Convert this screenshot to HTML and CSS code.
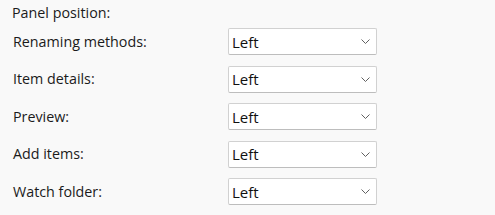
FILE: index.html
```html
<!DOCTYPE html>
<html lang="en">
<head>
    <meta charset="UTF-8">
    <title>Panel position</title>
    <link rel="stylesheet" href="styles.css">
</head>
<body>
    <div class="panel">
        <div class="section-title">Panel position:</div>
        <div class="rows">
            <div class="label">Renaming methods:</div>
            <div class="select"><span>Left</span><svg class="chevron" width="9" height="5" viewBox="0 0 9 5"><path d="M0.5 0.5 L4.5 4.5 L8.5 0.5" fill="none" stroke="#606060" stroke-width="1"/></svg></div>

            <div class="label">Item details:</div>
            <div class="select"><span>Left</span><svg class="chevron" width="9" height="5" viewBox="0 0 9 5"><path d="M0.5 0.5 L4.5 4.5 L8.5 0.5" fill="none" stroke="#606060" stroke-width="1"/></svg></div>

            <div class="label">Preview:</div>
            <div class="select"><span>Left</span><svg class="chevron" width="9" height="5" viewBox="0 0 9 5"><path d="M0.5 0.5 L4.5 4.5 L8.5 0.5" fill="none" stroke="#606060" stroke-width="1"/></svg></div>

            <div class="label">Add items:</div>
            <div class="select"><span>Left</span><svg class="chevron" width="9" height="5" viewBox="0 0 9 5"><path d="M0.5 0.5 L4.5 4.5 L8.5 0.5" fill="none" stroke="#606060" stroke-width="1"/></svg></div>

            <div class="label">Watch folder:</div>
            <div class="select"><span>Left</span><svg class="chevron" width="9" height="5" viewBox="0 0 9 5"><path d="M0.5 0.5 L4.5 4.5 L8.5 0.5" fill="none" stroke="#606060" stroke-width="1"/></svg></div>
        </div>
    </div>
</body>
</html>
```

FILE: styles.css
```css
body {
    margin: 0;
    background: #f9f9f9;
    font-family: 'Open Sans', 'Noto Sans', Arial, sans-serif;
    font-size: 14.3px;
    color: #1b1b1b;
}

.panel {
    padding: 3px 0 0 12px;
}

.section-title {
    height: 25px;
    line-height: 20px;
}

.rows {
    display: grid;
    grid-template-columns: 216px 149px;
    grid-auto-rows: 27px;
    row-gap: 10.5px;
    align-items: center;
}

.label {
    padding-left: 1px;
    line-height: 20px;
}

.select {
    box-sizing: border-box;
    height: 27px;
    background: #ffffff;
    border: 1px solid #d1d1d1;
    border-bottom-color: #bdbdbd;
    border-radius: 2px;
    display: flex;
    align-items: center;
    justify-content: space-between;
    padding: 0 6px 0 3px;
    font-size: 15px;
    color: #101010;
}

.chevron {
    display: block;
}
```
